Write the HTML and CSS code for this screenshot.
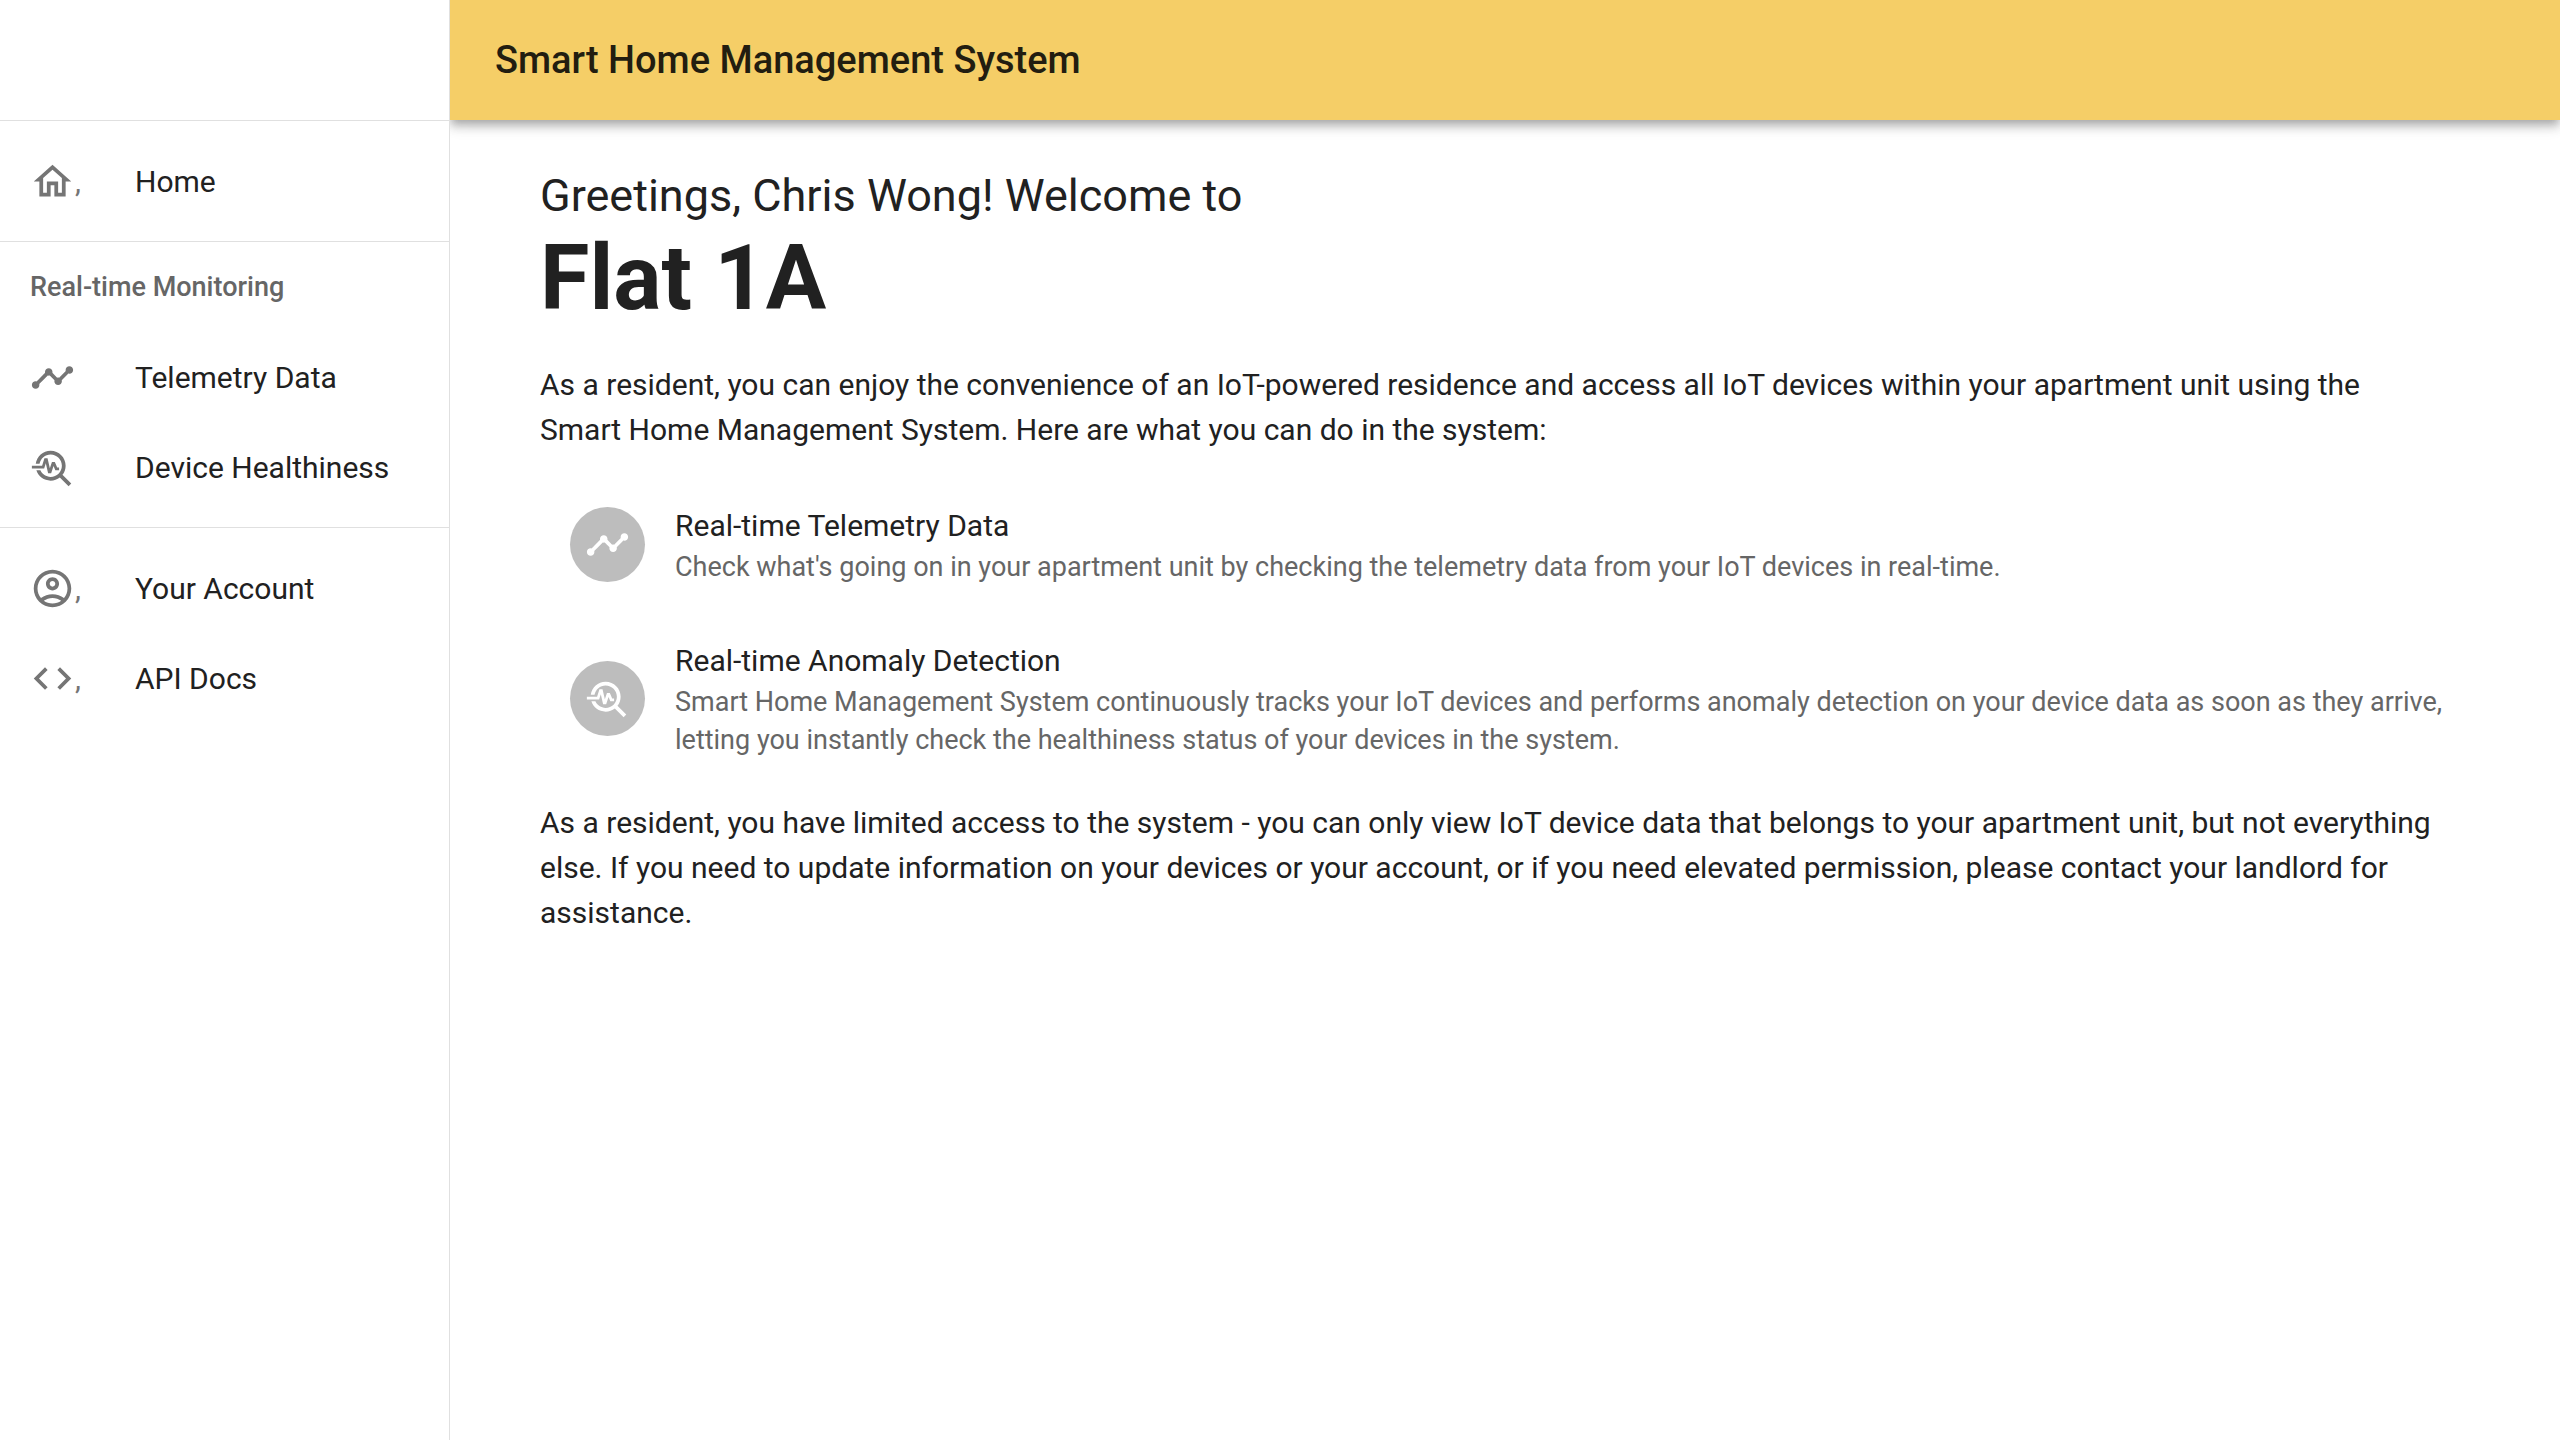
FILE: index.html
```html
<!DOCTYPE html>
<html lang="en">
<head>
<meta charset="utf-8">
<meta name="viewport" content="width=device-width, initial-scale=1">
<title>Smart Home Management System</title>
<link rel="stylesheet" href="styles.css">
</head>
<body>
<svg class="sprite" aria-hidden="true">
  <symbol id="icon-home" viewBox="0 0 24 24"><path d="M12 5.69l5 4.5V18h-2v-6H9v6H7v-7.81l5-4.5M12 3L2 12h3v8h6v-6h2v6h6v-8h3L12 3z"/></symbol>
  <symbol id="icon-timeline" viewBox="0 0 24 24"><path d="M23 8c0 1.1-.9 2-2 2-.18 0-.35-.02-.51-.07l-3.56 3.55c.05.16.07.34.07.52 0 1.1-.9 2-2 2s-2-.9-2-2c0-.18.02-.36.07-.52l-2.55-2.55c-.16.05-.34.07-.52.07s-.36-.02-.52-.07l-4.55 4.56c.05.16.07.33.07.51 0 1.1-.9 2-2 2s-2-.9-2-2 .9-2 2-2c.18 0 .35.02.51.07l4.56-4.55C8.02 9.36 8 9.18 8 9c0-1.1.9-2 2-2s2 .9 2 2c0 .18-.02.36-.07.52l2.55 2.55c.16-.05.34-.07.52-.07s.36.02.52.07l3.55-3.56C19.02 8.35 19 8.18 19 8c0-1.1.9-2 2-2s2 .9 2 2z"/></symbol>
  <symbol id="icon-troubleshoot" viewBox="0 0 24 24"><path d="M22 20.59l-4.69-4.69C18.37 14.55 19 12.85 19 11c0-4.42-3.58-8-8-8-4.08 0-7.44 3.05-7.93 7h2.02C5.57 7.17 8.03 5 11 5c3.31 0 6 2.69 6 6s-2.69 6-6 6c-2.42 0-4.5-1.44-5.45-3.5H3.4C4.45 16.69 7.46 19 11 19c1.85 0 3.55-.63 4.9-1.69L20.59 22 22 20.59z"/><path d="M8.43 9.69L9.65 15h1.64l1.26-3.78.95 2.28h2V12h-1l-1.25-3h-1.54l-1.12 3.37L9.35 7H7.7l-1.25 4H1v1.5h6.55l.88-2.81z"/></symbol>
  <symbol id="icon-account" viewBox="0 0 24 24"><path d="M12 2C6.48 2 2 6.48 2 12s4.48 10 10 10 10-4.48 10-10S17.52 2 12 2zM7.35 18.5C8.66 17.56 10.26 17 12 17s3.34.56 4.65 1.5C15.34 19.44 13.74 20 12 20s-3.34-.56-4.65-1.5zm10.79-1.38C16.45 15.8 14.32 15 12 15s-4.45.8-6.14 2.12C4.7 15.73 4 13.95 4 12c0-4.42 3.58-8 8-8s8 3.58 8 8c0 1.95-.7 3.73-1.86 5.12z"/><path d="M12 6c-1.93 0-3.5 1.57-3.5 3.5S10.07 13 12 13s3.5-1.57 3.5-3.5S13.93 6 12 6zm0 5c-.83 0-1.5-.67-1.5-1.5S11.17 8 12 8s1.5.67 1.5 1.5S12.83 11 12 11z"/></symbol>
  <symbol id="icon-code" viewBox="0 0 24 24"><path d="M9.4 16.6L4.8 12l4.6-4.6L8 6l-6 6 6 6 1.4-1.4zm5.2 0l4.6-4.6-4.6-4.6L16 6l6 6-6 6-1.4-1.4z"/></symbol>
</svg>
<div class="app">
  <aside class="sidebar">
    <div class="sidebar-top"></div>
    <nav class="nav">
      <ul class="nav-list">
        <li><a class="nav-item" href="#home"><span class="nav-icon"><svg class="icon"><use href="#icon-home"/></svg>,</span>Home</a></li>
      </ul>
      <h2 class="nav-heading">Real-time Monitoring</h2>
      <ul class="nav-list nav-list-headed">
        <li><a class="nav-item" href="#telemetry"><span class="nav-icon"><svg class="icon"><use href="#icon-timeline"/></svg></span>Telemetry Data</a></li>
        <li><a class="nav-item" href="#health"><span class="nav-icon"><svg class="icon"><use href="#icon-troubleshoot"/></svg></span>Device Healthiness</a></li>
      </ul>
      <ul class="nav-list">
        <li><a class="nav-item" href="#account"><span class="nav-icon"><svg class="icon"><use href="#icon-account"/></svg>,</span>Your Account</a></li>
        <li><a class="nav-item" href="#docs"><span class="nav-icon"><svg class="icon"><use href="#icon-code"/></svg>,</span>API Docs</a></li>
      </ul>
    </nav>
  </aside>
  <div class="page">
    <header class="app-bar"><div class="app-title">Smart Home Management System</div></header>
    <main class="content">
      <p class="greeting">Greetings, Chris Wong! Welcome to</p>
      <h1 class="flat">Flat 1A</h1>
      <p class="text">As a resident, you can enjoy the convenience of an IoT-powered residence and access all IoT devices within your apartment unit using the Smart Home Management System. Here are what you can do in the system:</p>
      <ul class="features">
        <li class="feature">
          <span class="avatar"><svg class="icon"><use href="#icon-timeline"/></svg></span>
          <div>
            <h2 class="feature-title">Real-time Telemetry Data</h2>
            <p class="feature-text">Check what's going on in your apartment unit by checking the telemetry data from your IoT devices in real-time.</p>
          </div>
        </li>
        <li class="feature">
          <span class="avatar"><svg class="icon"><use href="#icon-troubleshoot"/></svg></span>
          <div>
            <h2 class="feature-title">Real-time Anomaly Detection</h2>
            <p class="feature-text">Smart Home Management System continuously tracks your IoT devices and performs anomaly detection on your device data as soon as they arrive, letting you instantly check the healthiness status of your devices in the system.</p>
          </div>
        </li>
      </ul>
      <p class="text">As a resident, you have limited access to the system - you can only view IoT device data that belongs to your apartment unit, but not everything else. If you need to update information on your devices or your account, or if you need elevated permission, please contact your landlord for assistance.</p>
    </main>
  </div>
</div>
</body>
</html>
```
FILE: styles.css
```css
* { box-sizing: border-box; }

body {
  margin: 0;
  background: #fff;
  color: #212121;
  font: 400 30px/45px Roboto, "Liberation Sans", sans-serif;
}

h1, h2, p, ul { margin: 0; padding: 0; }
ul { list-style: none; }
a { color: inherit; text-decoration: none; }

.sprite { display: none; }

.icon {
  display: block;
  flex: none;
  width: 45px;
  height: 45px;
  fill: currentColor;
}

.app {
  display: grid;
  grid-template-columns: 450px minmax(0, 1fr);
  min-height: 100vh;
}

/* Sidebar */
.sidebar {
  position: relative;
  z-index: 1;
  background: #fff;
  border-right: 1px solid #e0e0e0;
}

.sidebar-top { height: 120px; }

.nav-list {
  padding: 15px 0;
  border-top: 1px solid #e0e0e0;
}

.nav-list-headed {
  padding-top: 0;
  border-top: 0;
}

.nav-heading {
  padding: 0 30px;
  border-top: 1px solid #e0e0e0;
  color: #666;
  font-size: 27px;
  font-weight: 500;
  line-height: 90px;
}

.nav-item {
  display: flex;
  align-items: center;
  height: 90px;
  padding: 0 30px;
}

.nav-icon {
  display: flex;
  flex: none;
  width: 105px;
  color: #757575;
}

/* Main area */
.app-bar {
  display: flex;
  align-items: center;
  height: 120px;
  padding: 0 45px;
  background: #f5ce67;
  color: #221d10;
  box-shadow: 0 4px 8px -2px rgba(0, 0, 0, .2), 0 8px 9px 0 rgba(0, 0, 0, .14), 0 2px 19px 0 rgba(0, 0, 0, .12);
}

.app-title {
  font-size: 38px;
  font-weight: 500;
  line-height: 60px;
}

.content { padding: 46px 90px 45px; }

.greeting {
  font-size: 45px;
  line-height: 60px;
}

.flat {
  margin-bottom: 31px;
  font-size: 90px;
  font-weight: 700;
  line-height: 105px;
}

.text { max-width: 1900px; }

.features { padding: 25px 0 15px; }

.feature {
  display: flex;
  align-items: center;
  gap: 30px;
  padding: 26px 15px 26px 30px;
}

.avatar {
  display: flex;
  flex: none;
  align-items: center;
  justify-content: center;
  width: 75px;
  height: 75px;
  border-radius: 50%;
  background: #bdbdbd;
  color: #fff;
}

.feature-title {
  font-size: 30px;
  font-weight: 400;
}

.feature-text {
  color: #666;
  font-size: 27px;
  line-height: 38px;
}
```
